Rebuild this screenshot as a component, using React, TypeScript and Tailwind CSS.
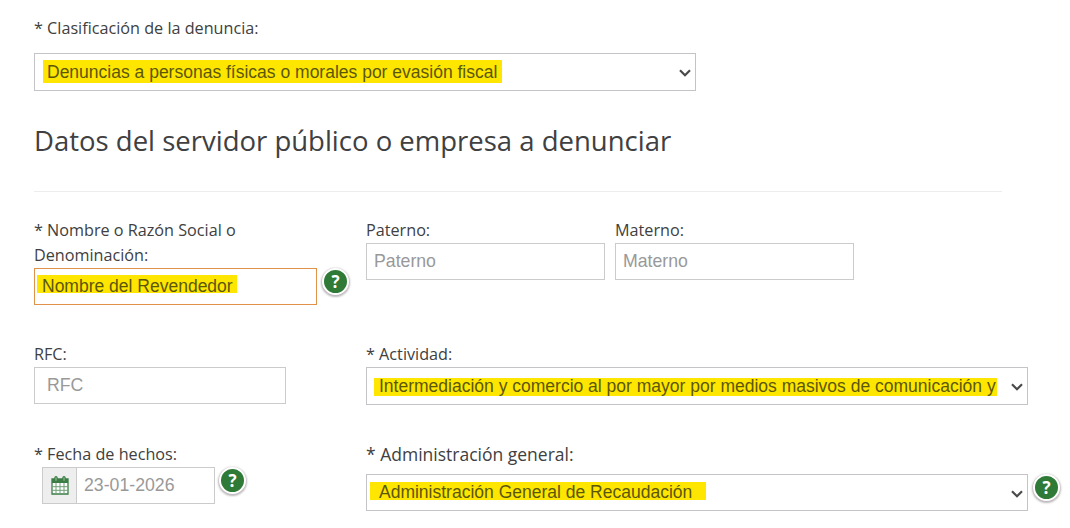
import clsx from 'clsx';
import type { ReactNode } from 'react';

function Label({
  children,
  className = 'text-[16.2px]',
}: {
  children: ReactNode;
  className?: string;
}) {
  return (
    <div
      className={clsx('pt-px leading-[25px] whitespace-nowrap', className)}
    >
      {children}
    </div>
  );
}

function Mark({
  children,
  className,
}: {
  children: ReactNode;
  className: string;
}) {
  return (
    <span
      className={clsx(
        "block bg-[#ffe600] font-['Liberation_Sans',Arial,sans-serif] text-[17.5px] whitespace-nowrap text-[#5b5709]",
        className,
      )}
    >
      {children}
    </span>
  );
}

function SelectBox({
  children,
  className,
}: {
  children: ReactNode;
  className: string;
}) {
  return (
    <div
      role="combobox"
      aria-expanded="false"
      className={clsx(
        'flex w-[662px] shrink-0 items-start justify-between border border-[#c3c3c8] bg-white pr-1',
        className,
      )}
    >
      {children}
      <svg
        width="12"
        height="8"
        viewBox="0 0 12 8"
        fill="none"
        stroke="#4a4a4a"
        strokeWidth="2.2"
        className="mt-[15px] shrink-0"
      >
        <path d="M1 1.2 6 6.2 11 1.2" />
      </svg>
    </div>
  );
}

function TextBox({
  children,
  className,
}: {
  children: ReactNode;
  className: string;
}) {
  return (
    <div
      className={clsx(
        "h-[37px] border bg-white font-['Liberation_Sans',Arial,sans-serif] text-[17.7px] leading-[34px] text-[#999]",
        className,
      )}
    >
      {children}
    </div>
  );
}

function Help({ className }: { className?: string }) {
  return (
    <button
      type="button"
      aria-label="Ayuda"
      className={clsx(
        'flex size-[27px] shrink-0 items-center justify-center rounded-full border-2 border-white bg-[#2f7a37] text-[17px] leading-none font-bold text-white shadow-[0_1px_2px_1px_#bdb8bb]',
        className,
      )}
    >
      ?
    </button>
  );
}

function CalendarIcon() {
  return (
    <svg width="18" height="19" viewBox="0 0 18 19" fill="none">
      <path d="M1 3h16v15H1z" fill="#fff" stroke="#3b7d45" strokeWidth="1.3" />
      <path d="M1 3h16v4H1z" fill="#3b7d45" />
      <path
        d="M5 7v11M9 7v11M13 7v11M1 10.7h16M1 14.3h16"
        stroke="#6f9f76"
        strokeWidth="1"
      />
      <path
        d="M5 1.8v2.6M13 1.8v2.6"
        stroke="#3b7d45"
        strokeWidth="3.4"
        strokeLinecap="round"
      />
      <path
        d="M5 1.8v2.6M13 1.8v2.6"
        stroke="#a9c5ac"
        strokeWidth="1"
        strokeLinecap="round"
      />
    </svg>
  );
}

export default function App() {
  return (
    <main className="h-[528px] w-[1070px] overflow-hidden bg-white pt-[15px] pl-[34px] font-['Open_Sans',sans-serif] text-[#404041]">
      <Label>* Clasificación de la denuncia:</Label>
      <SelectBox className="mt-3 h-[38px]">
        <Mark className="mt-[6px] ml-2 h-[23px] w-[459px] pl-1 leading-[24px]">
          Denuncias a personas físicas o morales por evasión fiscal
        </Mark>
      </SelectBox>

      <h2 className="mt-[30px] h-10 text-[27.5px] leading-10 whitespace-nowrap">
        Datos del servidor público o empresa a denunciar
      </h2>
      <hr className="mt-[30px] w-[968px] border-[#ececec]" />

      <div className="mt-[25px] flex h-[88px] items-start">
        <div className="w-[283px] shrink-0">
          <Label>
            * Nombre o Razón Social o<br />
            Denominación:
          </Label>
          <TextBox className="w-[283px] border-[#e0914a]">
            <Mark className="mt-[6px] ml-[2px] h-[18px] w-[200px] pl-[5px] leading-[22px]">
              Nombre del Revendedor
            </Mark>
          </TextBox>
        </div>
        <Help className="mt-[51px] ml-[5px]" />
        <div className="ml-[17px] w-[239px] shrink-0">
          <Label>Paterno:</Label>
          <TextBox className="border-[#cbcbcb] pl-[7px]">Paterno</TextBox>
        </div>
        <div className="ml-[10px] w-[239px] shrink-0">
          <Label>Materno:</Label>
          <TextBox className="border-[#cbcbcb] pl-[7px]">Materno</TextBox>
        </div>
      </div>

      <div className="mt-[36px] flex h-[64px] items-start">
        <div className="w-[332px] shrink-0">
          <Label>RFC:</Label>
          <TextBox className="w-[252px] border-[#cbcbcb] pl-3">RFC</TextBox>
        </div>
        <div>
          <Label>* Actividad:</Label>
          <SelectBox className="h-[38px]">
            <Mark className="mt-[10px] ml-[7px] h-[18px] w-[623px] pl-[5px] leading-[17px]">
              Intermediación y comercio al por mayor por medios masivos de
              comunicación y
            </Mark>
          </SelectBox>
        </div>
      </div>

      <div className="mt-[36px] flex items-start">
        <div className="w-[332px] shrink-0">
          <Label>* Fecha de hechos:</Label>
          <div className="ml-2 flex items-start">
            <div className="flex h-[37px] w-[34px] items-center justify-center border border-r-0 border-[#cbcbcb] bg-[#eee]">
              <CalendarIcon />
            </div>
            <TextBox className="w-[139px] border-[#cbcbcb] pl-[7px]">
              23-01-2026
            </TextBox>
            <Help className="ml-1" />
          </div>
        </div>
        <div>
          <Label className="text-[17.5px]">* Administración general:</Label>
          <div className="mt-[7px] flex items-start">
            <SelectBox className="h-[37px]">
              <Mark className="mt-[7px] ml-[3px] h-[18px] w-[336px] pl-[9px] leading-[20px]">
                Administración General de Recaudación
              </Mark>
            </SelectBox>
            <Help className="ml-[5px]" />
          </div>
        </div>
      </div>
    </main>
  );
}
